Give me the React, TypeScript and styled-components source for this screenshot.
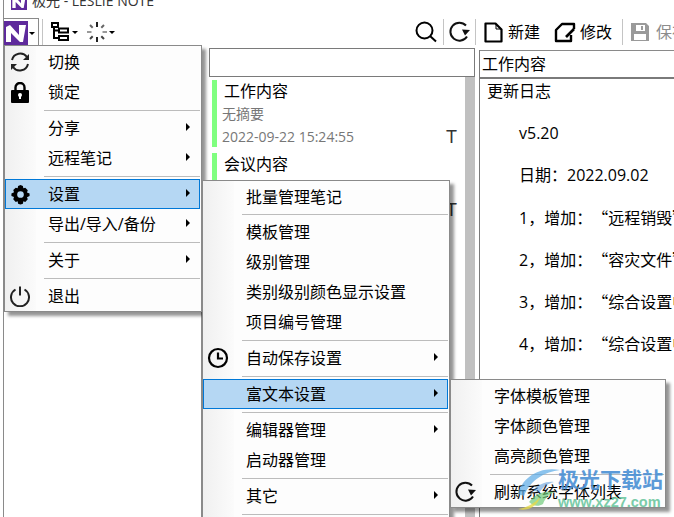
import React from 'react';
import styled, { createGlobalStyle } from 'styled-components';

const GlobalStyle = createGlobalStyle`
  html, body {
    margin: 0;
    padding: 0;
    background: #ffffff;
    overflow: hidden;
  }
  body {
    font-family: "Open Sans", "Noto Sans CJK SC", sans-serif;
    color: #000;
  }
`;

const Screen = styled.div`
  position: relative;
  width: 674px;
  height: 517px;
  overflow: hidden;
  background: #fff;
`;

const Window = styled.div`
  display: flex;
  flex-direction: column;
  height: 100%;
  margin-left: 3px;
  border-left: 1px solid #8a8a8a;
`;

const TitleBar = styled.div`
  display: flex;
  align-items: flex-end;
  gap: 5px;
  height: 10px;
  padding-left: 7px;
  overflow: hidden;
  font-size: 14px;
  line-height: 16px;
  color: #333;
`;

const TitleText = styled.span`
  margin-bottom: 1px;
`;

const Toolbar = styled.div`
  display: flex;
  align-items: center;
  height: 36px;
  padding-top: 8px;
  box-sizing: border-box;
  svg {
    flex-shrink: 0;
  }
`;

const ToolGroup = styled.div<{ $gap?: number; $left?: number; $width?: number }>`
  display: flex;
  align-items: center;
  gap: ${(p) => p.$gap ?? 4}px;
  margin-left: ${(p) => p.$left ?? 0}px;
  width: ${(p) => (p.$width ? `${p.$width}px` : 'auto')};
  flex-shrink: 0;
`;

const LogoButton = styled.div`
  display: flex;
  align-items: center;
  gap: 1px;
  width: 36px;
  height: 28px;
  border: 1px solid #8a8a8a;
  border-bottom: none;
  box-sizing: border-box;
  background: #fff;
  margin-left: -1px;
`;

const Caret = styled.span`
  width: 0;
  height: 0;
  margin-top: 1px;
  border-left: 3px solid transparent;
  border-right: 3px solid transparent;
  border-top: 3px solid #000;
`;

const ToolSep = styled.span<{ $left: number; $right: number }>`
  width: 1px;
  height: 26px;
  margin: 0 ${(p) => p.$right}px 0 ${(p) => p.$left}px;
  background: #c4c4c4;
  flex-shrink: 0;
`;

const ToolLabel = styled.span<{ $muted?: boolean }>`
  font-size: 16px;
  line-height: 24px;
  white-space: nowrap;
  color: ${(p) => (p.$muted ? '#8c8c8c' : '#000')};
`;

const Spacer = styled.div`
  flex: 1;
`;

const Panes = styled.div`
  display: flex;
  flex: 1;
  min-height: 0;
`;

const TreePane = styled.div`
  width: 197px;
  margin-top: 1px;
  border-right: 1px solid #8a8a8a;
  background: #fff;
  flex-shrink: 0;
`;

const ListPane = styled.div`
  display: flex;
  flex-direction: column;
  width: 266px;
  margin-left: 7px;
  flex-shrink: 0;
`;

const SearchBox = styled.div`
  height: 29px;
  margin-top: 2px;
  border: 1px solid #7a7a7a;
  box-sizing: border-box;
`;

const ListBody = styled.div`
  display: flex;
  flex: 1;
`;

const Notes = styled.div`
  flex: 1;
  display: flex;
  flex-direction: column;
  padding-top: 3px;
  gap: 6px;
`;

const Scrollbar = styled.div`
  width: 10px;
  background: #c0c0c0;
`;

const Note = styled.div`
  display: grid;
  grid-template-columns: 1fr auto;
  height: 67px;
  padding-left: 5px;
  border-left: 5px solid #80ff80;
  margin-left: 3px;
  box-sizing: border-box;
  padding-right: 8px;
`;

const NoteTitle = styled.div`
  grid-column: 1 / 3;
  margin-left: 2px;
  font-size: 16px;
  line-height: 22px;
  height: 22px;
`;

const NoteSummary = styled.div`
  grid-column: 1 / 3;
  font-size: 14px;
  line-height: 23px;
  height: 24px;
  color: #777;
`;

const NoteDate = styled.div`
  font-size: 14px;
  line-height: 22px;
  color: #777;
`;

const NoteType = styled.div`
  font-family: "Liberation Sans", sans-serif;
  font-size: 18px;
  line-height: 22px;
  color: #333;
`;

const ContentPane = styled.div`
  flex: 1;
  min-width: 0;
  margin-left: 4px;
  border-left: 1px solid #7a7a7a;
  margin-top: 4px;
  display: flex;
  flex-direction: column;
`;

const ContentTitle = styled.div`
  height: 29px;
  padding-left: 2px;
  border-top: 1px solid #8a8a8a;
  border-bottom: 2px solid #7a7a7a;
  box-sizing: border-box;
  font-size: 16px;
  line-height: 27px;
  white-space: nowrap;
`;

const ContentBody = styled.div`
  display: flex;
  flex-direction: column;
  margin-top: -1px;
  padding-left: 7px;
  font-size: 16px;
  white-space: nowrap;
  overflow: hidden;
  text-spacing-trim: space-all;
`;

const ContentLine = styled.div<{ $indent?: boolean }>`
  height: 42px;
  line-height: 26px;
  padding-left: ${(p) => (p.$indent ? 32 : 0)}px;
`;

const Quoted = styled.span`
  font-family: "Noto Sans CJK SC", sans-serif;
`;

const Menu = styled.div<{ $left: number; $top: number; $width: number; $z: number }>`
  position: absolute;
  left: ${(p) => p.$left}px;
  top: ${(p) => p.$top}px;
  width: ${(p) => p.$width}px;
  z-index: ${(p) => p.$z};
  box-sizing: border-box;
  display: flex;
  flex-direction: column;
  padding: 1px 1px 0 0;
  background: linear-gradient(to right, #f0f0f0 0, #fbfbfb 31px, #fdfdfd 31px, #fdfdfd 100%);
  border: 1px solid #8a8a8a;
  box-shadow: 4px 4px 3px rgba(0, 0, 0, 0.42);
`;

const Row = styled.div<{ $active?: boolean }>`
  position: relative;
  display: flex;
  align-items: center;
  height: 30px;
  box-sizing: border-box;
  padding: 0 0 2px 42px;
  font-size: 16px;
  white-space: nowrap;
  border: 1px solid ${(p) => (p.$active ? '#0078d7' : 'transparent')};
  background: ${(p) => (p.$active ? '#b5d7f3' : 'transparent')};
`;

const RowIcon = styled.span`
  position: absolute;
  left: 3px;
  top: 3px;
  width: 22px;
  height: 22px;
  display: flex;
  align-items: center;
  justify-content: center;
`;

const SubArrow = styled.span`
  position: absolute;
  right: 9px;
  top: 9px;
  width: 0;
  height: 0;
  border-top: 4px solid transparent;
  border-bottom: 4px solid transparent;
  border-left: 4px solid #000;
`;

const Separator = styled.div<{ $tight?: boolean }>`
  height: 1px;
  margin: ${(p) => (p.$tight ? 2 : 3)}px 0 2px 39px;
  background: #bcbcbc;
`;

const Watermark = styled.div`
  position: absolute;
  left: 517px;
  top: 466px;
  z-index: 10;
  display: flex;
  align-items: flex-start;
  pointer-events: none;
`;

const MarkText = styled.div`
  display: flex;
  flex-direction: column;
  align-items: flex-start;
  margin-left: -3px;
`;

const MarkName = styled.span`
  font-size: 21px;
  line-height: 27px;
  font-weight: 700;
  color: #4a90d4;
  opacity: 0.9;
`;

const MarkUrl = styled.span`
  margin-top: 1px;
  font-size: 14.5px;
  line-height: 16px;
  font-weight: 700;
  font-family: "Liberation Sans", sans-serif;
  color: #6cc7a0;
  opacity: 0.9;
`;

type IconProps = { size?: number; color?: string };

const LogoIcon = ({ size = 24 }: { size?: number }) => (
  <svg width={size} height={size} viewBox="0 0 24 24">
    <rect width="24" height="24" fill="#5e2a9c" />
    <path d="M2 6l4-2 9 10V4h7l-3 17h-3L7 12v9H2z" fill="#fff" />
  </svg>
);

const SyncIcon = ({ size = 22, color = '#222' }: IconProps) => (
  <svg width={size} height={size} viewBox="0 0 22 22" fill="none" stroke={color} strokeWidth="2">
    <path d="M3 9a8.400 8.400 0 0 1 15-3" />
    <path d="M19 13a8.400 8.400 0 0 1-15 3" />
    <path d="M20 3v6h-6z" fill={color} stroke="none" />
    <path d="M2 19v-6h6z" fill={color} stroke="none" />
  </svg>
);

const LockIcon = () => (
  <svg width="18" height="21" viewBox="0 0 18 21">
    <path d="M4.500 9V5.500a4.500 4.500 0 0 1 9 0V9" fill="none" stroke="#000" strokeWidth="2.400" />
    <rect y="8" width="18" height="13" rx="1" fill="#000" />
    <circle cx="9" cy="13" r="2" fill="#fff" />
    <path d="M8 13h2v4H8z" fill="#fff" />
  </svg>
);

const GearIcon = () => (
  <svg width="21" height="21" viewBox="0 0 22 22">
    <path
      fillRule="evenodd"
      fill="#000"
      d="M11 1l2.500 1 .5 2.400 2-.6 2.600 2.700-.8 2.300 2.700 1.200v2.600l-2.700 1.200.8 2.300-2.600 2.700-2-.6-.5 2.400-2.500 1-2.500-1-.5-2.400-2 .6L3.400 16l.8-2.300L1.500 12.500V9.900l2.700-1.200L3.400 6.400 6 3.800l2 .6.500-2.400zM11 7.500a3.500 3.500 0 1 0 0 7 3.500 3.500 0 0 0 0-7z"
    />
  </svg>
);

const PowerIcon = () => (
  <svg width="22" height="22" viewBox="0 0 22 22" fill="none" stroke="#222" strokeWidth="2">
    <path d="M6.500 4.500a9 9 0 1 0 9 0" />
    <path d="M11 1.500v9" />
  </svg>
);

const ClockIcon = () => (
  <svg width="22" height="22" viewBox="0 0 22 22" fill="none" stroke="#000" strokeWidth="2.200">
    <circle cx="11" cy="11" r="9" />
    <path d="M11 5.500V11.500H16" />
  </svg>
);

const RefreshIcon = ({ size = 22 }: { size?: number }) => (
  <svg width={size} height={size} viewBox="0 0 22 22" fill="none" stroke="#111" strokeWidth="2">
    <path d="M18 15.500A9 9 0 1 1 17 4.500" />
    <path d="M21 9l-5 5.500-3-6z" fill="#111" stroke="none" />
  </svg>
);

const SearchIcon = () => (
  <svg width="22" height="22" viewBox="0 0 22 22" fill="none" stroke="#000" strokeWidth="2">
    <circle cx="9.500" cy="9.500" r="8" />
    <path d="M15 15l6 5.500" />
  </svg>
);

const TreeIcon = () => (
  <svg width="20" height="20" viewBox="0 0 20 20" fill="none" stroke="#000" strokeWidth="2">
    <rect x="2" y="1" width="6" height="4" />
    <rect x="9" y="6.500" width="9" height="4" />
    <rect x="9" y="14" width="9" height="4" />
    <path d="M4 5v11h5M4 8.500h5" />
  </svg>
);

const SpinnerIcon = () => (
  <svg width="20" height="20" viewBox="0 0 20 20" fill="none" stroke="#222" strokeWidth="2">
    <path d="M10 0v5M10 15v5" />
    <path d="M3 3l2.700 2.700M17 3l-2.700 2.700" stroke="#666" />
    <path d="M3 17l2.700-2.700M17 17l-2.700-2.700" stroke="#444" />
    <path d="M0 10h4.500M15.500 10H20" stroke="#999" />
  </svg>
);

const NewIcon = () => (
  <svg width="20" height="22" viewBox="0 0 20 22" fill="none" stroke="#000" strokeWidth="2.200" strokeLinejoin="round">
    <path d="M1.500 2.500h10l6 6v12h-16z" />
    <path d="M12 3v5h5" strokeWidth="1" />
  </svg>
);

const EditIcon = () => (
  <svg width="22" height="22" viewBox="0 0 22 22" fill="none" stroke="#000" strokeWidth="2.400" strokeLinejoin="round">
    <path d="M20 8V3H8L2 9v11h15v-6" />
    <path d="M12 16l8-8" strokeWidth="2.600" />
  </svg>
);

const SaveIcon = () => (
  <svg width="20" height="20" viewBox="0 0 20 20">
    <path
      fillRule="evenodd"
      fill="#9a9a9a"
      d="M1 1h15l3 3v15H1zM6 3v6h9V3zM11 4h2v4h-2zM4 12v6h12v-6z"
    />
  </svg>
);

const WatermarkLogo = () => (
  <svg width="44" height="44" viewBox="0 0 44 44">
    <path d="M1 28C5 12 22 0 43 4 28 6 14 13 7 30z" fill="#5aa9e6" opacity="0.7" />
    <path d="M16 24c6-6 14-9 21-8-7 2-11 5-15 11z" fill="#2f7fd0" opacity="0.45" />
    <path d="M12 36c6-8 16-12 26-10-6 2-10 6-12 12-5 3-10 2-14-2z" fill="#6fca7a" opacity="0.7" />
    <path d="M1 43c8-1 16-5 22-12-2 8-11 15-22 12z" fill="#e6d94a" opacity="0.8" />
  </svg>
);

const notes = [
  { title: '工作内容', summary: '无摘要', date: '2022-09-22 15:24:55' },
  { title: '会议内容', summary: '无摘要', date: '2022-09-22 15:24:31' },
];

const logLines = [
  { prefix: '1，增加：', body: '“远程销毁”' },
  { prefix: '2，增加：', body: '“容灾文件”' },
  { prefix: '3，增加：', body: '“综合设置中”' },
  { prefix: '4，增加：', body: '“综合设置中”' },
];

const App = (): JSX.Element => (
  <Screen>
    <GlobalStyle />
    <Window>
      <TitleBar>
        <LogoIcon size={16} />
        <TitleText>极光 - LESLIE NOTE</TitleText>
      </TitleBar>
      <Toolbar>
        <LogoButton>
          <LogoIcon />
          <Caret />
        </LogoButton>
        <ToolSep $left={3} $right={7} />
        <ToolGroup $gap={2}>
          <TreeIcon />
          <Caret />
        </ToolGroup>
        <ToolGroup $gap={2} $left={9}>
          <SpinnerIcon />
          <Caret />
        </ToolGroup>
        <Spacer />
        <SearchIcon />
        <ToolSep $left={6} $right={5} />
        <RefreshIcon />
        <ToolSep $left={4} $right={8} />
        <ToolGroup>
          <NewIcon />
          <ToolLabel>新建</ToolLabel>
        </ToolGroup>
        <ToolGroup $left={14}>
          <EditIcon />
          <ToolLabel>修改</ToolLabel>
        </ToolGroup>
        <ToolSep $left={10} $right={7} />
        <ToolGroup $gap={6} $width={44}>
          <SaveIcon />
          <ToolLabel $muted>保存</ToolLabel>
        </ToolGroup>
      </Toolbar>
      <Panes>
        <TreePane />
        <ListPane>
          <SearchBox />
          <ListBody>
            <Notes>
              {notes.map((note) => (
                <Note key={note.title}>
                  <NoteTitle>{note.title}</NoteTitle>
                  <NoteSummary>{note.summary}</NoteSummary>
                  <NoteDate>{note.date}</NoteDate>
                  <NoteType>T</NoteType>
                </Note>
              ))}
            </Notes>
            <Scrollbar />
          </ListBody>
        </ListPane>
        <ContentPane>
          <ContentTitle>工作内容</ContentTitle>
          <ContentBody>
            <ContentLine>更新日志</ContentLine>
            <ContentLine $indent>v5.20</ContentLine>
            <ContentLine $indent>日期：2022.09.02</ContentLine>
            {logLines.map((line) => (
              <ContentLine key={line.prefix} $indent>
                {line.prefix}
                <Quoted>{line.body}</Quoted>
              </ContentLine>
            ))}
          </ContentBody>
        </ContentPane>
      </Panes>
    </Window>

    <Menu $left={4} $top={45} $width={198} $z={1}>
      <Row><RowIcon><SyncIcon /></RowIcon>切换</Row>
      <Row><RowIcon><LockIcon /></RowIcon>锁定</Row>
      <Separator />
      <Row>分享<SubArrow /></Row>
      <Row>远程笔记<SubArrow /></Row>
      <Separator />
      <Row $active><RowIcon><GearIcon /></RowIcon>设置<SubArrow /></Row>
      <Row>导出/导入/备份<SubArrow /></Row>
      <Separator />
      <Row>关于<SubArrow /></Row>
      <Separator />
      <Row><RowIcon><PowerIcon /></RowIcon>退出</Row>
    </Menu>

    <Menu $left={202} $top={180} $width={248} $z={2}>
      <Row>批量管理笔记</Row>
      <Separator $tight />
      <Row>模板管理</Row>
      <Row>级别管理</Row>
      <Row>类别级别颜色显示设置</Row>
      <Row>项目编号管理</Row>
      <Separator />
      <Row><RowIcon><ClockIcon /></RowIcon>自动保存设置<SubArrow /></Row>
      <Separator />
      <Row $active>富文本设置<SubArrow /></Row>
      <Separator />
      <Row>编辑器管理<SubArrow /></Row>
      <Row>启动器管理</Row>
      <Separator />
      <Row>其它<SubArrow /></Row>
      <Separator />
    </Menu>

    <Menu $left={450} $top={379} $width={216} $z={3}>
      <Row>字体模板管理</Row>
      <Row>字体颜色管理</Row>
      <Row>高亮颜色管理</Row>
      <Separator />
      <Row><RowIcon><RefreshIcon /></RowIcon>刷新系统字体列表</Row>
    </Menu>

    <Watermark>
      <WatermarkLogo />
      <MarkText>
        <MarkName>极光下载站</MarkName>
        <MarkUrl>www.xz27.com</MarkUrl>
      </MarkText>
    </Watermark>
  </Screen>
);

export default App;
